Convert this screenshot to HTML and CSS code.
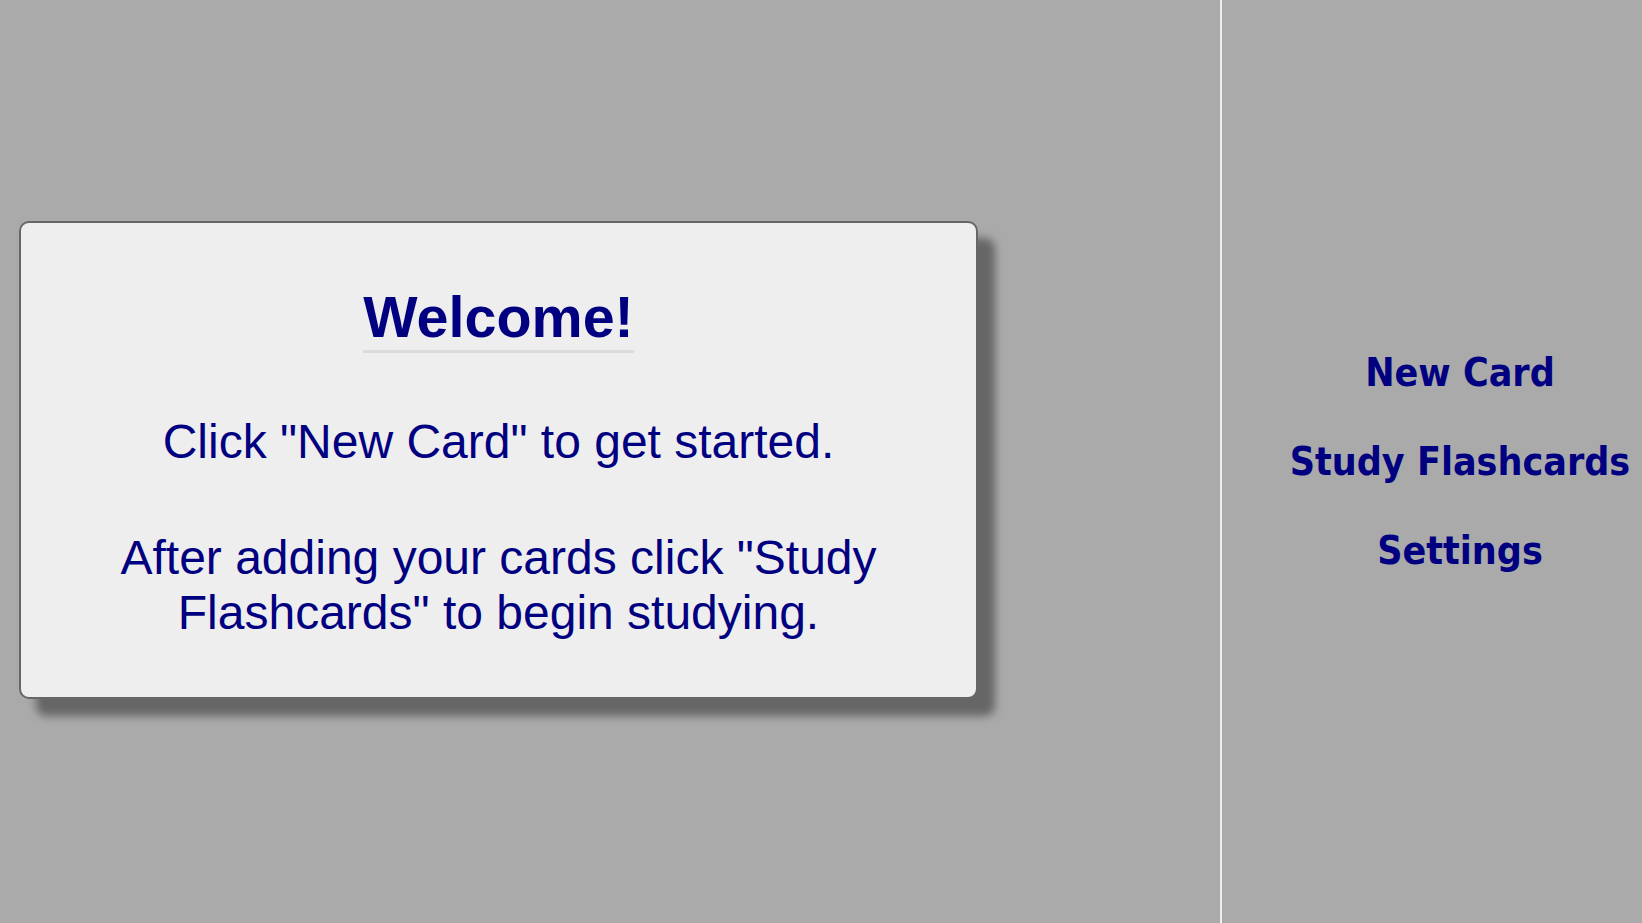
FILE: index.html
```html
<!DOCTYPE html>
<html lang="en">
<head>
<meta charset="utf-8">
<title>Flashcards</title>
<link rel="stylesheet" href="styles.css">
</head>
<body>
<div class="app">
  <main class="main">
    <section class="card">
      <h1 class="title">Welcome!</h1>
      <p class="msg">Click "New Card" to get started.</p>
      <p class="msg">After adding your cards click "Study Flashcards" to begin studying.</p>
    </section>
  </main>
  <nav class="sidebar">
    <a class="nav-link" href="#">New Card</a>
    <a class="nav-link" href="#">Study Flashcards</a>
    <a class="nav-link" href="#">Settings</a>
  </nav>
</div>
</body>
</html>
```

FILE: styles.css
```css
html, body {
  margin: 0;
  padding: 0;
  height: 100%;
  background: #aaaaaa;
}

.app {
  display: flex;
  height: 100vh;
  overflow: hidden;
}

.main {
  width: 1220px;
  flex: 0 0 1220px;
  display: flex;
  align-items: center;
  padding-left: 19px;
  box-sizing: border-box;
}

.card {
  width: 959px;
  height: 478px;
  margin-bottom: 3px;
  box-sizing: border-box;
  background: #eeeeee;
  border: 2px solid #666666;
  border-radius: 10px;
  box-shadow: 17px 17px 8px #666666;
  padding: 61px 40px 0;
  text-align: center;
  font-family: "Liberation Sans", Arial, sans-serif;
  color: #000080;
}

.title {
  display: inline-block;
  margin: 0;
  font-size: 57.5px;
  font-weight: bold;
  line-height: normal;
  border-bottom: 3px solid #dcdcdc;
}

.msg {
  margin: 61px 0 0;
  font-size: 48px;
  line-height: normal;
}

.sidebar {
  flex: 1;
  border-left: 2px solid #eeeeee;
  display: flex;
  flex-direction: column;
  align-items: center;
  justify-content: center;
  gap: 44px;
  padding-left: 56px;
}

.nav-link {
  font-family: "DejaVu Sans Condensed", "DejaVu Sans", sans-serif;
  font-stretch: condensed;
  font-weight: bold;
  font-size: 39px;
  line-height: normal;
  color: #000080;
  text-decoration: none;
  white-space: nowrap;
}
```
